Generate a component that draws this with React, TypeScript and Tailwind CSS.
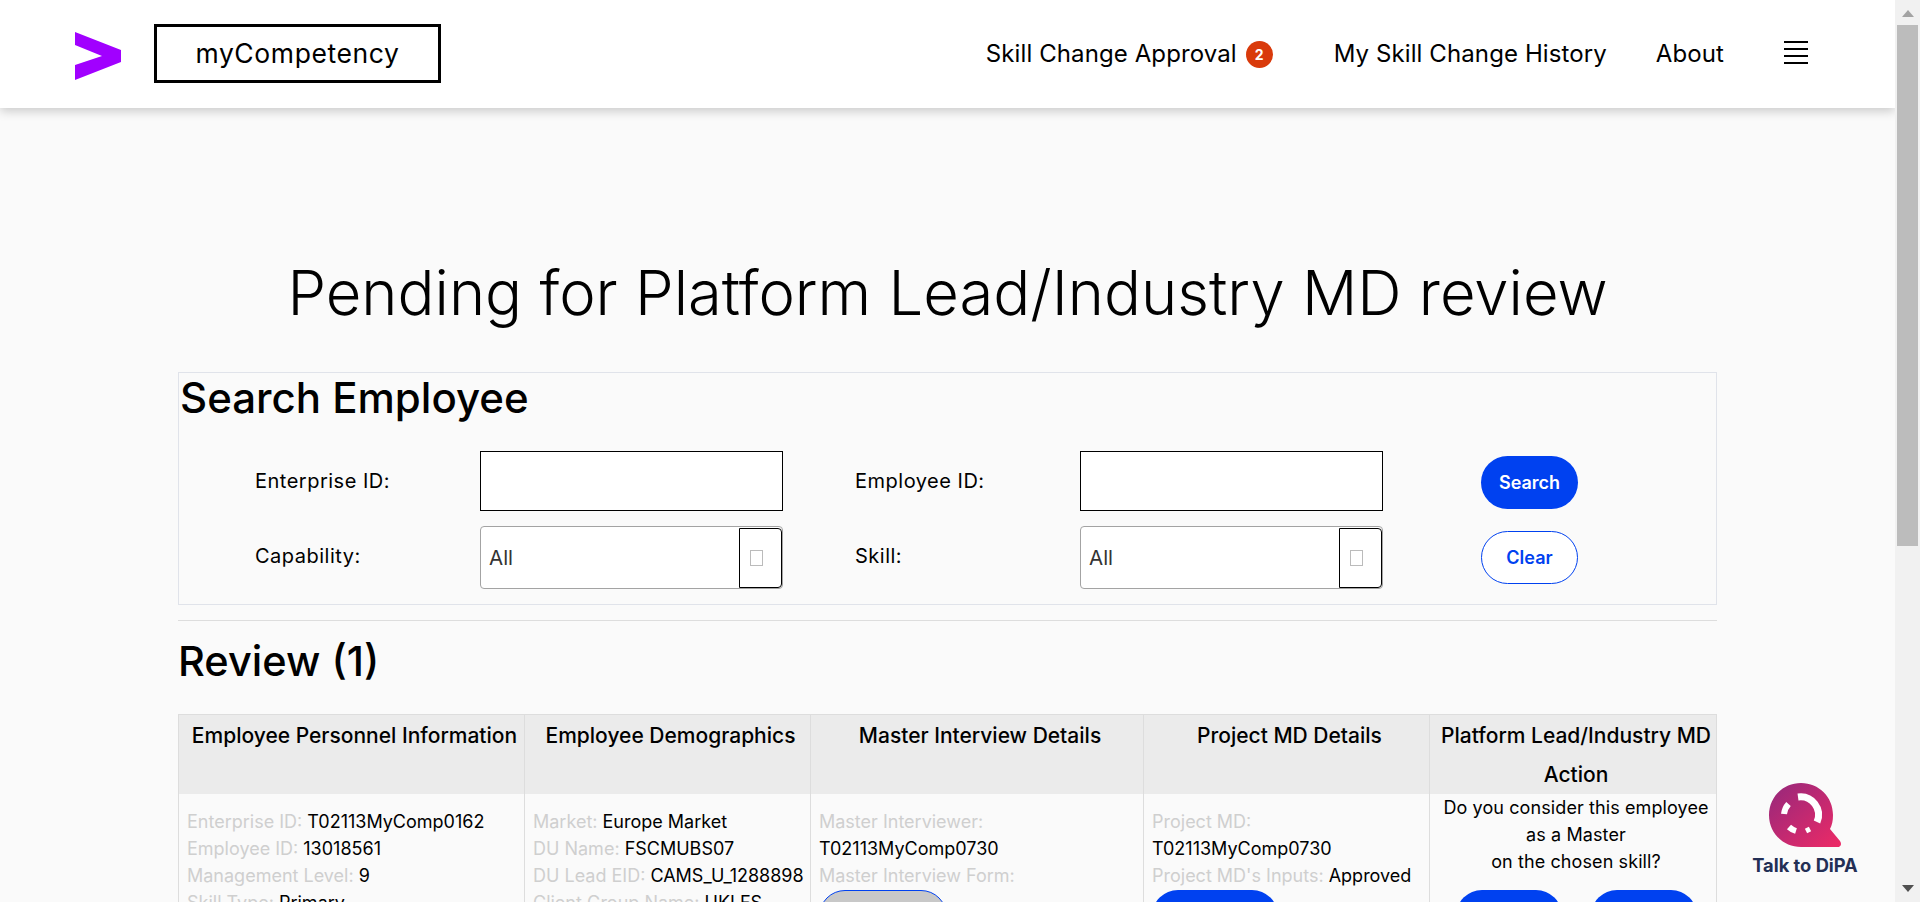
import React from "react";

const font = { fontFamily: '"Inter", "Noto Sans", sans-serif' };

function Field({ label, value }: { label: string; value?: string }) {
  return (
    <div className="h-[27px] whitespace-nowrap">
      <span className="text-[#cfcfcf]">{label}</span>
      {value ? <span className="text-black"> {value}</span> : null}
    </div>
  );
}

function SelectBox() {
  return (
    <div className="flex h-[63px] w-[303px] items-center rounded-[4px] border border-[#a3a3a3] bg-white pl-[8px]">
      <span className="flex-1 pt-[2px] text-[20.5px] text-[#333]">All</span>
      <div className="flex h-[60px] w-[43px] items-center justify-start rounded-r-[4px] border border-black pl-[10px]">
        <div className="h-[16px] w-[13px] border border-[#bbb]" />
      </div>
    </div>
  );
}

function Label({ children, up }: { children: React.ReactNode; up?: boolean }) {
  return <div className={"text-[20px] tracking-[0.5px] " + (up ? "-mt-[3px]" : "")}>{children}</div>;
}

export default function App() {
  return (
    <div className="flex h-[902px] w-[1920px] overflow-hidden bg-[#fafafa] text-black" style={font}>
      <div className="relative h-[902px] w-[1895px] overflow-hidden">
        <header className="relative z-10 flex h-[108px] items-center bg-white pl-[75px] pr-[87px] shadow-[0_3px_10px_rgba(0,0,0,0.2)]">
          <svg width="46" height="48" viewBox="0 0 46 48" className="mt-[4px] shrink-0">
            <path d="M0 0 L46 18 V30 L0 48 V33 L27 24 L0 13 Z" fill="#a100ff" />
          </svg>
          <div className="-mt-[1px] ml-[33px] flex h-[59px] w-[287px] items-center justify-center border-[3px] border-black text-[26.5px] tracking-[0.6px]">
            myCompetency
          </div>
          <nav className="ml-auto flex items-center text-[24px] tracking-[0.1px]">
            <span>Skill Change Approval</span>
            <span className="ml-[9px] flex h-[27px] w-[27px] items-center justify-center rounded-full bg-[#d93a0b] text-[14px] font-bold text-white">2</span>
            <span className="ml-[61px]">My Skill Change History</span>
            <span className="ml-[49px]">About</span>
            <div className="-mt-[3px] ml-[60px] flex h-[24px] w-[24px] flex-col justify-between">
              <div className="h-[2px] bg-black" />
              <div className="h-[2px] bg-black" />
              <div className="h-[2px] bg-black" />
              <div className="h-[2px] bg-black" />
            </div>
          </nav>
        </header>

        <main className="mx-auto w-[1539px]">
          <h1 className="mt-[145px] h-[80px] text-center text-[61.5px] font-light leading-[80px]">
            Pending for Platform Lead/Industry MD review
          </h1>

          <section className="mt-[39px] h-[233px] border border-[#e0e3ea]">
            <h2 className="h-[50px] pl-[1px] text-[42px] font-medium leading-[50px]">Search Employee</h2>
            <div className="mt-[28px] grid grid-cols-[225px_303px_72px_225px_303px_98px_97px] grid-rows-[60px_63px] items-center gap-y-[15px] pl-[76px]">
              <Label>Enterprise ID:</Label>
              <input className="h-[60px] w-[303px] border border-black bg-white" aria-label="Enterprise ID" />
              <div />
              <Label>Employee ID:</Label>
              <input className="h-[60px] w-[303px] border border-black bg-white" aria-label="Employee ID" />
              <div />
              <button className="mt-[2px] h-[53px] w-[97px] rounded-[27px] bg-[#0041f0] text-[18px] font-semibold text-white">Search</button>
              <Label up>Capability:</Label>
              <SelectBox />
              <div />
              <Label up>Skill:</Label>
              <SelectBox />
              <div />
              <button className="h-[53px] w-[97px] rounded-[27px] border border-[#0041f0] bg-white text-[18px] font-semibold text-[#0041f0]">Clear</button>
            </div>
          </section>

          <hr className="mt-[15px] border-[#dddddd]" />

          <h2 className="mt-[15px] h-[50px] text-[41.5px] font-medium leading-[50px]">Review (1)</h2>

          <div className="mt-[28px] grid grid-cols-[346px_286px_333px_286px_286px] border border-[#dddddd]">
            {[
              "Employee Personnel Information",
              "Employee Demographics",
              "Master Interview Details",
              "Project MD Details",
              "Platform Lead/Industry MD Action",
            ].map((t, i) => (
              <div key={t} className={"h-[79px] bg-[#ebebeb] pl-[6px] pt-[1px] text-center text-[21px] font-medium leading-[39px] " + (i < 4 ? "border-r border-[#dddddd]" : "")}>
                {t}
              </div>
            ))}
            <div className="border-r border-[#dddddd] pl-[8px] pt-[14px] text-[18px] leading-[27px]">
              <Field label="Enterprise ID:" value="T02113MyComp0162" />
              <Field label="Employee ID:" value="13018561" />
              <Field label="Management Level:" value="9" />
              <Field label="Skill Type:" value="Primary" />
            </div>
            <div className="border-r border-[#dddddd] pl-[8px] pt-[14px] text-[18px] leading-[27px]">
              <Field label="Market:" value="Europe Market" />
              <Field label="DU Name:" value="FSCMUBS07" />
              <Field label="DU Lead EID:" value="CAMS_U_1288898" />
              <Field label="Client Group Name:" value="UKI FS" />
            </div>
            <div className="border-r border-[#dddddd] pl-[8px] pt-[14px] text-[18px] leading-[27px]">
              <Field label="Master Interviewer:" />
              <div className="h-[27px]">T02113MyComp0730</div>
              <Field label="Master Interview Form:" />
              <div className="mt-[1px] h-[53px] w-[128px] rounded-[26px] border border-[#0041f0] bg-[#c8c8c8]" />
            </div>
            <div className="border-r border-[#dddddd] pl-[8px] pt-[14px] text-[18px] leading-[27px]">
              <Field label="Project MD:" />
              <div className="h-[27px]">T02113MyComp0730</div>
              <Field label="Project MD's Inputs:" value="Approved" />
              <div className="mt-[1px] h-[53px] w-[126px] rounded-[26px] bg-[#0041f0]" />
            </div>
            <div className="text-center text-[18px] leading-[27px] tracking-[0.1px]">
              <div className="pl-[6px]">
                <div>Do you consider this employee</div>
                <div>as a Master</div>
                <div>on the chosen skill?</div>
              </div>
              <div className="mt-[15px] flex justify-center gap-[29px] pl-[7px]">
                <div className="h-[53px] w-[106px] rounded-[26px] bg-[#0041f0]" />
                <div className="h-[53px] w-[106px] rounded-[26px] bg-[#0041f0]" />
              </div>
            </div>
          </div>
        </main>

        <div className="absolute left-[1752px] top-[783px] flex w-[106px] flex-col items-center">
          <svg width="73" height="65" viewBox="0 0 73 65">
            <defs>
              <linearGradient id="dipa" x1="0" y1="0" x2="1" y2="1">
                <stop offset="0" stopColor="#94287c" />
                <stop offset="1" stopColor="#ee2a66" />
              </linearGradient>
            </defs>
            <path d="M32 0 C50 0 64 14 64 32 C64 38 63 42 61 46 L71 58 C73 61 72 64 68 64 L32 64 C14 64 0 50 0 32 C0 14 14 0 32 0 Z" fill="url(#dipa)" />
            <path d="M29 14 A18 18 0 0 1 48 39" fill="none" stroke="#fff" strokeWidth="7" />
            <path d="M19.5 21 A18 18 0 0 0 15 31" fill="none" stroke="#fff" strokeWidth="6" />
            <path d="M20 44 A18 18 0 0 0 27 48" fill="none" stroke="#fff" strokeWidth="6" />
            <path d="M37 48 L41 46" fill="none" stroke="#fff" strokeWidth="5" />
          </svg>
          <div className="mt-[6px] whitespace-nowrap text-[18.3px] font-bold leading-[22px] text-[#232f55]">Talk to DiPA</div>
        </div>
      </div>

      <aside className="flex h-[902px] w-[25px] flex-col items-center bg-[#f1f1f1]">
        <div className="mt-[10px] h-0 w-0 border-x-[6px] border-b-[7px] border-x-transparent border-b-[#a3a3a3]" />
        <div className="mt-[8px] h-[521px] w-[21px] bg-[#bcbcbc]" />
        <div className="mb-[10px] mt-auto h-0 w-0 border-x-[6px] border-t-[7px] border-x-transparent border-t-[#505050]" />
      </aside>
    </div>
  );
}
